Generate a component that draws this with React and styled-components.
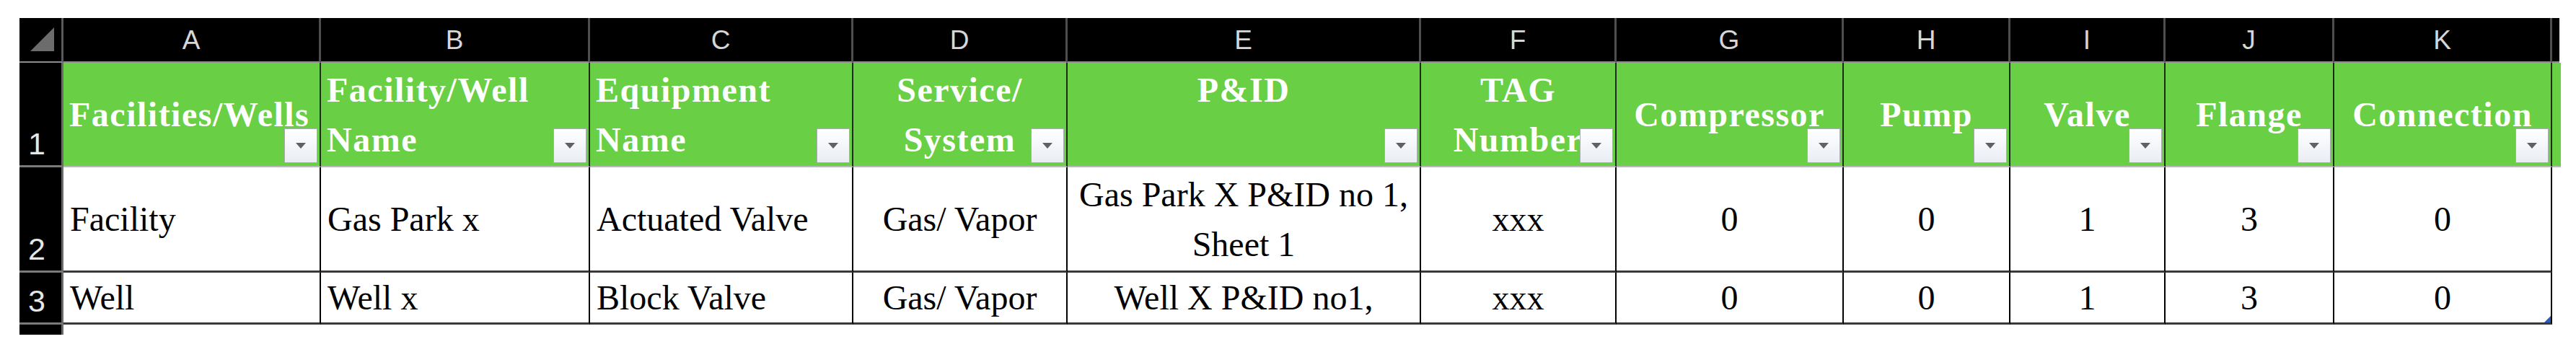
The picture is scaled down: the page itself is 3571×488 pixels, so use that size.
import React from 'react';
import styled, { createGlobalStyle } from 'styled-components';

const GlobalStyle = createGlobalStyle`
  html, body {
    margin: 0;
    padding: 0;
    background: #ffffff;
  }
  body {
    font-family: "Liberation Serif", "Times New Roman", serif;
  }
`;

const columns = [
	{ letter: 'A', width: 357, title: 'Facilities/Wells', align: 'left' },
	{ letter: 'B', width: 373, title: 'Facility/Well\nName', align: 'left' },
	{ letter: 'C', width: 365, title: 'Equipment\nName', align: 'left' },
	{ letter: 'D', width: 297, title: 'Service/\nSystem', align: 'center' },
	{ letter: 'E', width: 490, title: 'P&ID\n\u00a0', align: 'center' },
	{ letter: 'F', width: 271, title: 'TAG\nNumber', align: 'center' },
	{ letter: 'G', width: 315, title: 'Compressor', align: 'center' },
	{ letter: 'H', width: 231, title: 'Pump', align: 'center' },
	{ letter: 'I', width: 215, title: 'Valve', align: 'center' },
	{ letter: 'J', width: 234, title: 'Flange', align: 'center' },
	{ letter: 'K', width: 302, title: 'Connection', align: 'center' },
];

const rows = [
	{
		num: 2,
		cells: [
			'Facility',
			'Gas Park x',
			'Actuated Valve',
			'Gas/ Vapor',
			'Gas Park X P&ID no 1,\nSheet 1',
			'xxx',
			'0',
			'0',
			'1',
			'3',
			'0',
		],
	},
	{
		num: 3,
		cells: [
			'Well',
			'Well x',
			'Block Valve',
			'Gas/ Vapor',
			'Well X P&ID no1,',
			'xxx',
			'0',
			'0',
			'1',
			'3',
			'0',
		],
	},
];

const template = `61px ${columns.map((c) => `${c.width}px`).join(' ')} 10px`;

function FilterButton() {
	return (
		<Filter>
			<svg width='16' height='10' viewBox='0 0 16 10'>
				<path d='M1 1 L15 1 L8 9 Z' fill='#5f6166' />
			</svg>
		</Filter>
	);
}

function App() {
	return (
		<>
			<GlobalStyle />
			<Sheet $template={template}>
				<Corner>
					<svg width='40' height='40' viewBox='0 0 40 40'>
						<path d='M4 36 L37 3 L37 36 Z' fill='#6c6c6c' />
					</svg>
				</Corner>
				{columns.map((c) => (
					<ColLetter key={c.letter}>{c.letter}</ColLetter>
				))}
				<ColLetter $edge />

				<RowNum>1</RowNum>
				{columns.map((c) => (
					<HeadCell key={c.letter} $align={c.align}>
						<Text>{c.title}</Text>
						<FilterButton />
					</HeadCell>
				))}
				<HeadCell $edge />

				{rows.map((r) => (
					<React.Fragment key={r.num}>
						<RowNum>{r.num}</RowNum>
						{r.cells.map((v, i) => (
							<DataCell
								key={columns[i].letter}
								$align={i < 3 ? 'left' : 'center'}
							>
								<Text>{v}</Text>
								{r.num === 3 && i === 10 && <ResizeMark />}
							</DataCell>
						))}
						<Blank />
					</React.Fragment>
				))}

				<RowNum $stub />
			</Sheet>
		</>
	);
}

export default App;

const Sheet = styled.div`
	display: grid;
	grid-template-columns: ${(p) => p.$template};
	grid-template-rows: 62px 145px 146px 72px 14px;
	margin: 25px 0 0 27px;
	width: max-content;
`;

const Corner = styled.div`
	background: #000;
	border-right: 3px solid #5a5a5a;
	border-bottom: 2px solid #8c8c8c;
	display: flex;
	align-items: center;
	justify-content: center;
	padding-left: 4px;
`;

const ColLetter = styled.div`
	background: #000;
	color: #d6d6d6;
	font-family: 'Liberation Sans Narrow', 'Liberation Sans', Arial, sans-serif;
	font-size: 37px;
	display: flex;
	align-items: center;
	justify-content: center;
	padding-top: 2px;
	border-right: ${(p) => (p.$edge ? 'none' : '3px solid #4e4e4e')};
	border-bottom: 2px solid #8c8c8c;
	box-sizing: border-box;
`;

const RowNum = styled.div`
	background: #000;
	color: #e6e6e6;
	font-family: 'Liberation Sans Narrow', 'Liberation Sans', Arial, sans-serif;
	font-size: 43px;
	display: flex;
	align-items: flex-end;
	justify-content: center;
	padding: 0 10px 8px 0;
	border-right: 3px solid #6a6a6a;
	border-bottom: ${(p) => (p.$stub ? 'none' : '3px solid #7a7a7a')};
	box-sizing: border-box;
	line-height: 1;
`;

const HeadCell = styled.div`
	position: relative;
	background: #69cf45;
	color: #ffffff;
	font-weight: bold;
	font-size: 48px;
	letter-spacing: 1.5px;
	line-height: 69px;
	display: flex;
	align-items: center;
	justify-content: ${(p) => (p.$align === 'left' ? 'flex-start' : 'center')};
	text-align: ${(p) => p.$align || 'left'};
	padding: 0 ${(p) => (p.$align === 'left' ? '0 0 8px' : '6px')};
	border-right: ${(p) => (p.$edge ? 'none' : '2px solid #1d2b18')};
	border-bottom: 2px solid #b9b9b9;
	box-sizing: border-box;
	white-space: pre-line;
	overflow: hidden;
`;

const DataCell = styled.div`
	position: relative;
	background: #fff;
	color: #000;
	font-size: 48px;
	line-height: 69px;
	display: flex;
	align-items: center;
	justify-content: ${(p) => (p.$align === 'left' ? 'flex-start' : 'center')};
	text-align: ${(p) => p.$align};
	padding: ${(p) => (p.$align === 'left' ? '0 0 0 9px' : '0 6px')};
	border-right: 2px solid #000;
	border-bottom: 3px solid #3a3a3a;
	box-sizing: border-box;
	white-space: pre-line;
`;

const Text = styled.span`
	display: block;
`;

const Blank = styled.div`
	background: #fff;
`;

const Filter = styled.div`
	position: absolute;
	right: 3px;
	bottom: 4px;
	width: 46px;
	height: 48px;
	box-sizing: border-box;
	border: 1px solid #a9acb2;
	background: linear-gradient(#ffffff, #e9edf3);
	display: flex;
	align-items: center;
	justify-content: center;
`;

const ResizeMark = styled.div`
	position: absolute;
	right: 0;
	bottom: 0;
	width: 0;
	height: 0;
	border-left: 9px solid transparent;
	border-bottom: 9px solid #2a5bb8;
`;
